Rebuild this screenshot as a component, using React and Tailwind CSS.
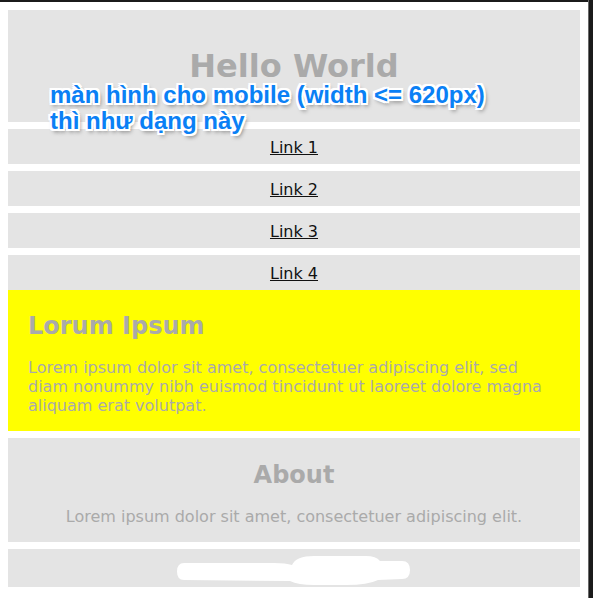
export default function App() {
    const body = { fontFamily: '"DejaVu Sans", Verdana, sans-serif' };
    return (
        <div className="flex min-h-[598px] bg-white">
            <div className="relative flex-1 flex flex-col">
                <div className="h-[2px] bg-[#1b1b1b]" />
                <div className="flex flex-col gap-[7px] px-[8px] pt-[8px] pb-[10px]" style={body}>
                    <header className="h-[112px] bg-[#e4e4e4] flex items-center justify-center">
                        <h1 className="text-[32px] leading-[38px] font-bold text-[#aaaaaa]">Hello World</h1>
                    </header>
                    <nav className="flex flex-col">
                        {['Link 1', 'Link 2', 'Link 3', 'Link 4'].map((l, i) => (
                            <div
                                key={l}
                                className={
                                    i < 3
                                        ? 'bg-[#e4e4e4] pt-[9px] pb-[7px] leading-[19px] text-center mb-[7px]'
                                        : 'bg-[#e4e4e4] pt-[9px] pb-[7px] leading-[19px] text-center'
                                }
                            >
                                <a href="#" className="text-[16px] text-[#111] underline">
                                    {l}
                                </a>
                            </div>
                        ))}
                        <section className="bg-[#ffff00] px-[20px] pt-[22px] pb-[16px]">
                            <h2 className="text-[24px] leading-[29px] font-bold text-[#aaaaaa]">Lorum Ipsum</h2>
                            <p className="mt-[17px] text-[16px] leading-[19px] text-[#aaaaaa]">
                                Lorem ipsum dolor sit amet, consectetuer adipiscing elit, sed diam nonummy nibh
                                euismod tincidunt ut laoreet dolore magna aliquam erat volutpat.
                            </p>
                        </section>
                    </nav>
                    <section className="bg-[#e4e4e4] pt-[23px] pb-[16px] text-center">
                        <h2 className="text-[24px] leading-[29px] font-bold text-[#aaaaaa]">About</h2>
                        <p className="mt-[17px] text-[16px] leading-[19px] text-[#aaaaaa]">
                            Lorem ipsum dolor sit amet, consectetuer adipiscing elit.
                        </p>
                    </section>
                    <footer className="h-[38px] bg-[#e4e4e4] flex items-center justify-center">
                        <svg width="240" height="32" viewBox="0 0 240 32" className="mt-[4px]">
                            <path
                                d="M10 9 L100 9 Q112 9 118 11 Q122 2 140 2 L192 2 Q202 2 206 7 L228 7 Q236 7 236 16 Q236 25 228 25 L204 26 Q194 31 172 31 L140 31 Q124 31 116 27 L10 26 Q3 26 3 17.5 Q3 9 10 9 Z"
                                fill="#ffffff"
                            />
                        </svg>
                    </footer>
                </div>
                <div
                    className="absolute left-[50px] top-[82px] text-[24px] leading-[26px] font-bold text-[#0a80f5] font-['Liberation_Sans',Arial,sans-serif] [text-shadow:-2px_-2px_0_#fff,2px_-2px_0_#fff,-2px_2px_0_#fff,2px_2px_0_#fff,0_2px_0_#fff,0_-2px_0_#fff,2px_0_0_#fff,-2px_0_0_#fff,2px_3px_4px_rgba(0,0,0,0.55)]"
                >
                    <div>màn hình cho mobile (width &lt;= 620px)</div>
                    <div>thì như dạng này</div>
                </div>
            </div>
            <div className="w-[5px] flex">
                <div className="w-[1px] bg-[#6a6a6a]" />
                <div className="flex-1 bg-[#1b1b1b]" />
            </div>
        </div>
    );
}
